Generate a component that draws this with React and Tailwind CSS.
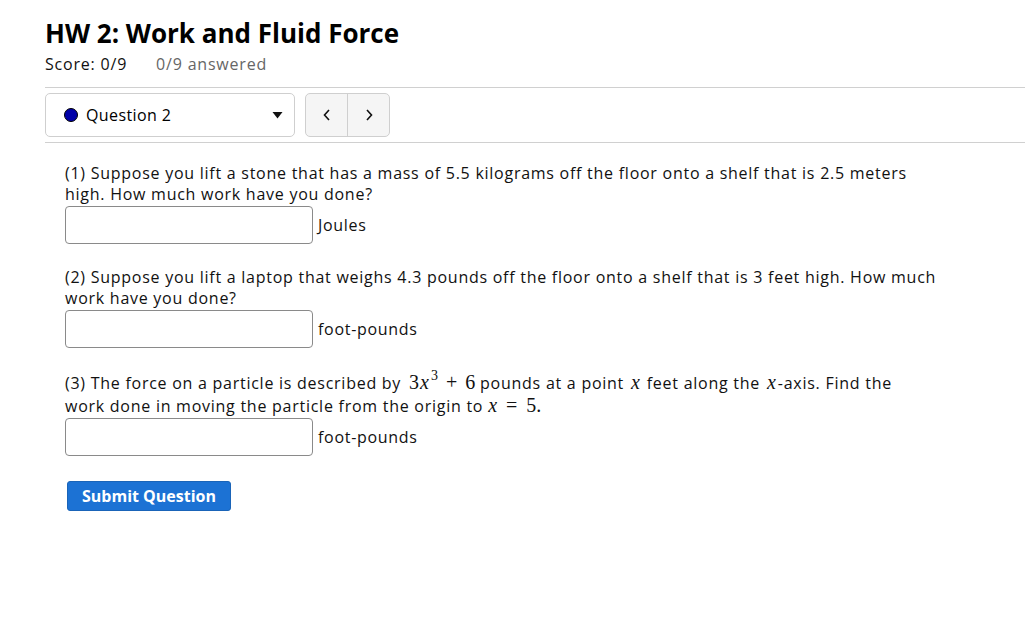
import React from 'react';

const serif = "font-['Liberation_Serif',serif] text-[20px] tracking-normal";

function Answer({ unit }) {
  return (
    <div className="flex items-center mt-[1px]">
      <input
        type="text"
        className="w-[248px] h-[38px] border border-[#8a8a8a] rounded-[4px] bg-white"
      />
      <span className="ml-[5px] text-[16px] text-[#111] tracking-[0.7px]">{unit}</span>
    </div>
  );
}

export default function App() {
  return (
    <div className="min-h-[640px] bg-white text-[#111] font-['Open_Sans',sans-serif]">
      <div className="pl-[45px] pt-[16px]">
        <h1 className="text-[26px] font-bold leading-[34px] text-black">HW 2: Work and Fluid Force</h1>
        <div className="flex gap-[29px] text-[16px] mt-[2px] leading-[24px] tracking-[0.8px]">
          <span className="text-[#111]">Score: 0/9</span>
          <span className="text-[#666]">0/9 answered</span>
        </div>

        <div className="mt-[11px] border-t border-b border-[#d0d0d0] py-[5px] flex items-center gap-[10px]">
          <div className="w-[250px] h-[44px] border border-[#cfcfcf] rounded-[5px] flex items-center pl-[18px] pr-[11px]">
            <span className="w-[14px] h-[14px] rounded-full bg-[#0000a8] border border-black"></span>
            <span className="ml-[8px] text-[16px] text-black tracking-[0.4px]">Question 2</span>
            <svg className="ml-auto" width="11" height="8" viewBox="0 0 11 8"><path d="M0.5 1 L10.5 1 L5.5 7.5 Z" fill="#111" /></svg>
          </div>
          <div className="h-[44px] w-[85px] flex border border-[#cfcfcf] rounded-[5px] bg-[#f5f5f5]">
            <button className="flex-1 flex items-center justify-center border-r border-[#cfcfcf]">
              <svg width="8" height="12" viewBox="0 0 8 12"><path d="M6 1 L1.5 6 L6 11" fill="none" stroke="#111" strokeWidth="1.6" /></svg>
            </button>
            <button className="flex-1 flex items-center justify-center">
              <svg width="8" height="12" viewBox="0 0 8 12"><path d="M2 1 L6.5 6 L2 11" fill="none" stroke="#111" strokeWidth="1.6" /></svg>
            </button>
          </div>
        </div>

        <div className="pl-[20px] pt-[20px] w-[960px] text-[16px] leading-[21px] tracking-[0.74px]">
          <div>
            <p>
              (1) Suppose you lift a stone that has a mass of 5.5 kilograms off the floor onto a shelf that is 2.5 meters
              <br />
              high. How much work have you done?
            </p>
            <Answer unit="Joules" />
          </div>
          <div className="mt-[23px]">
            <p>
              (2) Suppose you lift a laptop that weighs 4.3 pounds off the floor onto a shelf that is 3 feet high. How much
              <br />
              work have you done?
            </p>
            <Answer unit="foot-pounds" />
          </div>
          <div className="mt-[22px]">
            <p className="leading-[22px] pt-[1px]">
              (3) The force on a particle is described by{' '}
              <span className={`${serif} ml-[3px]`}>
                3<i className="mx-[1px]">x</i>
                <span className="inline-block align-top text-[14px] leading-[13px] -mt-[2px] ml-[1px]">3</span>
                <span className="mx-[8px]">+</span>6
              </span>{' '}
              pounds at a point <i className={`${serif} mx-[2px]`}>x</i> feet along the{' '}
              <i className={`${serif} mx-[2px]`}>x</i>-axis. Find the
              <br />
              work done in moving the particle from the origin to{' '}
              <span className={serif}>
                <i>x</i>
                <span className="mx-[9px]">=</span>5.
              </span>
            </p>
            <Answer unit="foot-pounds" />
          </div>
          <button className="mt-[25px] ml-[2px] h-[30px] w-[164px] rounded-[3px] bg-[#1c72d4] border border-[#1a64b8] text-white text-[16px] font-bold tracking-normal">
            Submit Question
          </button>
        </div>
      </div>
    </div>
  );
}
